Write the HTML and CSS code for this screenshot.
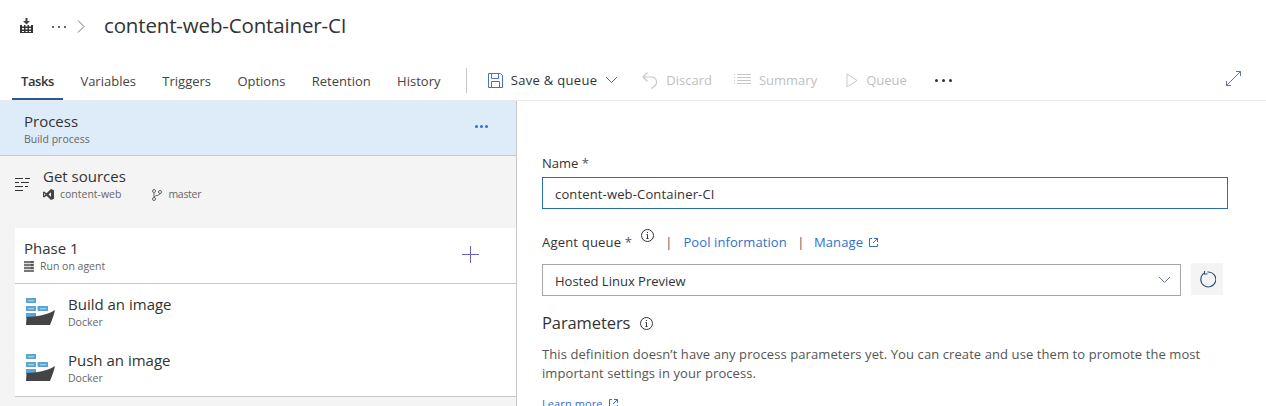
FILE: index.html
```html
<!DOCTYPE html>
<html lang="en">
<head>
    <meta charset="UTF-8">
    <title>content-web-Container-CI</title>
    <link rel="stylesheet" href="styles.css">
</head>
<body>
    <header class="title-bar">
        <svg class="build-icon" width="13" height="15" viewBox="0 0 13 15"><path d="M5.500 0h2v3H10L6.500 6.500 3 3h2.500z" fill="#444"/><path d="M0 7h2v1.500h2V7h1.500v1.500h2V7H9v1.500h2V7h2v8H0z" fill="#333"/><path d="M2 10h2v1.500H2zM5.500 10h2v1.500h-2zM9 10h2v1.500H9zM2 13h2v1H2zM5.500 13h2v1h-2zM9 13h2v1H9z" fill="#fff"/></svg>
        <span class="crumb-dots"><i></i><i></i><i></i></span>
        <svg class="crumb-arrow" width="8" height="13" viewBox="0 0 8 13"><path d="M1 .500l6 6-6 6" fill="none" stroke="#777"/></svg>
        <h1>content-web-Container-CI</h1>
    </header>

    <nav class="toolbar">
        <a class="tab active">Tasks</a>
        <a class="tab">Variables</a>
        <a class="tab">Triggers</a>
        <a class="tab">Options</a>
        <a class="tab">Retention</a>
        <a class="tab">History</a>
        <span class="divider"></span>
        <a class="cmd save">
            <svg width="15" height="15" viewBox="0 0 15 15"><path d="M.500.500h12l2 2v12H.500zM3.500.500v5h7v-5M3.500 14.500v-6h8v6" fill="none" stroke="#4a6fd0"/></svg>
            Save &amp; queue
            <svg class="chev" width="13" height="8" viewBox="0 0 13 8"><path d="M1 1l5.500 5.500L12 1" fill="none" stroke="#666"/></svg>
        </a>
        <a class="cmd off discard">
            <svg width="16" height="17" viewBox="0 0 16 17"><path d="M5.500 .500L1 5l4.500 4.500M1 5h8.500a5 5 0 0 1 3 9l-3 2.500" fill="none" stroke="#c8c8c8" stroke-width="1.200"/></svg>
            Discard
        </a>
        <a class="cmd off summary">
            <svg width="17" height="12" viewBox="0 0 17 12"><path d="M0 .500h1M3 .500h14M0 3.500h1M3 3.500h14M0 6.500h1M3 6.500h14M0 9.500h1M3 9.500h14" fill="none" stroke="#c8c8c8"/></svg>
            Summary
        </a>
        <a class="cmd off queue">
            <svg width="12" height="15" viewBox="0 0 12 15"><path d="M1 1l10 6.500L1 14z" fill="none" stroke="#c8c8c8"/></svg>
            Queue
        </a>
        <span class="more"><i></i><i></i><i></i></span>
        <svg class="expand" width="15" height="15" viewBox="0 0 15 15"><path d="M.500 14.500l14-14M10 .500h4.500V5M.500 10v4.500H5" fill="none" stroke="#5a70d8"/></svg>
    </nav>

    <main class="editor">
        <section class="left-pane">
            <div class="process-row">
                <div>
                    <div class="row-title">Process</div>
                    <div class="row-sub">Build process</div>
                </div>
                <span class="row-dots"><i></i><i></i><i></i></span>
            </div>

            <div class="sources-row">
                <svg class="sources-icon" width="15" height="15" viewBox="0 0 15 15"><path d="M0 1.500h8M10 1.500h5M0 5.500h4M6 5.500h8M0 9.500h8M10 9.500h3M0 13.500h8" fill="none" stroke="#333"/></svg>
                <div>
                    <div class="row-title">Get sources</div>
                    <div class="row-sub repo">
                        <svg width="11" height="11" viewBox="0 0 11 11"><path d="M8 0l3 1.300v8.400L8 11 3.500 6.800 1.200 8.500 0 8V3l1.200-.5 2.300 1.700zM8 3.300L5.500 5.500 8 7.700zM1.200 4v3l1.300-1.500z" fill="#444" fill-rule="evenodd"/></svg>
                        <span class="repo-name">content-web</span>
                        <svg width="10" height="12" viewBox="0 0 10 12"><circle cx="2" cy="2" r="1.500" fill="none" stroke="#666"/><circle cx="2" cy="10" r="1.500" fill="none" stroke="#666"/><circle cx="8" cy="3" r="1.500" fill="none" stroke="#666"/><path d="M2 3.500v5M8 4.500c0 2-6 2-6 4" fill="none" stroke="#666"/></svg>
                        <span class="branch">master</span>
                    </div>
                </div>
            </div>

            <div class="phase-card">
                <div class="phase-head">
                    <div class="phase-text">
                        <div class="row-title">Phase 1</div>
                        <div class="row-sub agent">
                            <svg width="10" height="11" viewBox="0 0 10 11"><path d="M0 0h10v11H0z" fill="#777"/><path d="M0 2.500h10M0 5.500h10M0 8.500h10" stroke="#ddd"/><path d="M7 1h2M7 4h2M7 7h2" stroke="#333"/></svg>
                            Run on agent
                        </div>
                    </div>
                    <svg class="add" width="17" height="17" viewBox="0 0 17 17"><path d="M8.500 0v17M0 8.500h17" stroke="#6a5fc9"/></svg>
                </div>
                <div class="task">
                    <svg class="docker" width="32" height="32" viewBox="0 0 32 32"><use href="#docker-ship"/></svg>
                    <div>
                        <div class="row-title">Build an image</div>
                        <div class="row-sub">Docker</div>
                    </div>
                </div>
                <div class="task">
                    <svg class="docker" width="32" height="32" viewBox="0 0 32 32"><use href="#docker-ship"/></svg>
                    <div>
                        <div class="row-title">Push an image</div>
                        <div class="row-sub">Docker</div>
                    </div>
                </div>
            </div>
        </section>

        <section class="right-pane">
            <label class="field-label" for="name">Name <span class="req">*</span></label>
            <input class="text-input" id="name" type="text" value="content-web-Container-CI">

            <div class="queue-label">
                <span class="queue-name">Agent queue <span class="req">*</span></span>
                <svg class="info raised" width="13" height="13" viewBox="0 0 13 13"><use href="#info-mark"/></svg>
                <span class="sep first">|</span>
                <a class="link">Pool information</a>
                <span class="sep">|</span>
                <a class="link">Manage</a>
                <svg class="ext" width="9" height="9" viewBox="0 0 9 9"><use href="#ext-mark"/></svg>
            </div>
            <div class="queue-row">
                <div class="select-box">
                    <span class="select-text">Hosted Linux Preview</span>
                    <svg width="13" height="8" viewBox="0 0 13 8"><path d="M1 1l5.500 5.500L12 1" fill="none" stroke="#6f7f90"/></svg>
                </div>
                <button class="refresh" type="button">
                    <svg width="17" height="17" viewBox="0 0 17 17"><path d="M5.500 2A7.500 7.500 0 1 0 8.500 1M5.500 0v3h3" fill="none" stroke="#2b4d7a" stroke-width="1.100"/></svg>
                </button>
            </div>

            <h2>Parameters <svg class="info" width="13" height="13" viewBox="0 0 13 13"><use href="#info-mark"/></svg></h2>
            <p class="param-text">This definition doesn’t have any process parameters yet. You can create and use them to promote the most important settings in your process.</p>
            <a class="link learn">Learn more <svg class="ext" width="9" height="9" viewBox="0 0 9 9"><use href="#ext-mark"/></svg></a>
        </section>
    </main>

    <svg class="defs" width="0" height="0">
        <symbol id="docker-ship" viewBox="0 0 32 32">
            <path d="M2 2h10v5H2zM2 10h10v5H2zM13.500 10H24v5H13.500zM2 17h10v5H2z" fill="#59a5d8"/>
            <path d="M4 4h6v1.200H4zM4 12h6v1.200H4zM16 12h6v1.200h-6z" fill="#a5cfeb"/>
            <path d="M2.500 21c10-.5 21-2 28.500-7-1 5-3 10-5 15H2z" fill="#444"/>
        </symbol>
        <symbol id="info-mark" viewBox="0 0 13 13">
            <circle cx="6.500" cy="6.500" r="6" fill="none" stroke="#333"/>
            <path d="M6.500 5.500v4M5.500 9.500h2M5.500 5.500h1" fill="none" stroke="#333"/>
            <path d="M6 3h1v1H6z" fill="#333"/>
        </symbol>
        <symbol id="ext-mark" viewBox="0 0 9 9">
            <path d="M3 .500H.500v8h8V6M5 .500h3.500V4M8.500 .500L4 5" fill="none" stroke="#2f6fd0"/>
        </symbol>
    </svg>
</body>
</html>
```

FILE: styles.css
```css
html, body {
    margin: 0;
    padding: 0;
    height: 406px;
    overflow: hidden;
}
body {
    font-family: "Open Sans", "Noto Sans", sans-serif;
    font-size: 13px;
    color: #333;
    background-color: white;
}
a {
    text-decoration: none;
}
.defs {
    position: absolute;
}

/* title */
.title-bar {
    display: flex;
    align-items: center;
    height: 52px;
    padding-left: 20px;
}
.build-icon {
    margin: 0 19px 2px 0;
}
.crumb-dots {
    display: flex;
    gap: 4px;
    margin: 2px 11px 0 0;
}
.crumb-dots i {
    width: 2px;
    height: 2px;
    background-color: #666;
}
.crumb-arrow {
    margin: 0 19px 0 0;
}
h1 {
    margin: 0 0 3px;
    font-size: 20.500px;
    font-weight: 400;
    letter-spacing: -0.150px;
    color: #333;
}

/* tabs + commands */
.toolbar {
    display: flex;
    align-items: center;
    height: 48px;
    padding-left: 12px;
    border-bottom: 1px solid #eaeaea;
}
.tab {
    display: flex;
    align-items: center;
    height: 38px;
    margin-top: 10px;
    padding: 0 9px;
    margin-right: 8.400px;
    box-sizing: border-box;
    color: #444;
}
.tab.active {
    color: #333;
    font-weight: 600;
    letter-spacing: -0.400px;
    border-bottom: 2px solid #2b579a;
    padding-top: 2px;
}
.divider {
    width: 1px;
    height: 25px;
    margin: 8px 21px 0 8px;
    background-color: #c8c8c8;
}
.cmd {
    display: flex;
    align-items: center;
    gap: 8px;
    margin-top: 8px;
    color: #333;
}
.save {
    letter-spacing: 0.300px;
}
.cmd.off {
    color: #c0c0c0;
}
.discard {
    margin-left: 24px;
}
.summary {
    margin-left: 22px;
}
.queue {
    margin-left: 29px;
}
.more {
    display: flex;
    gap: 4px;
    margin: 9px 0 0 28px;
}
.more i {
    width: 3px;
    height: 3px;
    border-radius: 50%;
    background-color: #333;
}
.expand {
    margin: 5px 25px 0 auto;
}

/* editor panes */
.editor {
    display: flex;
    height: 305px;
}
.left-pane {
    width: 516px;
    flex: none;
    background-color: #f4f4f4;
    border-right: 1px solid #c8c8c8;
}
.right-pane {
    flex: 1;
    padding: 53px 38px 0 25px;
}
.row-title {
    font-size: 15px;
    line-height: 20px;
    color: #333;
}
.row-sub {
    margin-top: 1px;
    font-size: 10.500px;
    line-height: 15px;
    color: #666;
}
.process-row {
    display: flex;
    align-items: center;
    justify-content: space-between;
    height: 55px;
    padding: 2px 28px 0 24px;
    box-sizing: border-box;
    background-color: #deecf9;
    border-bottom: 1px solid #c8c8c8;
}
.row-dots {
    display: flex;
    gap: 2px;
    margin-top: -6px;
}
.row-dots i {
    width: 3px;
    height: 3px;
    border-radius: 50%;
    background-color: #2f6fd0;
}
.sources-row {
    display: flex;
    height: 72px;
    padding: 10px 0 0 15px;
    box-sizing: border-box;
}
.sources-icon {
    margin: 11px 13px 0 0;
}
.repo {
    display: flex;
    align-items: center;
    gap: 6px;
}
.repo-name {
    margin-right: 25px;
}
.branch {
    letter-spacing: -0.300px;
}
.phase-card {
    margin-left: 15px;
    background-color: white;
    border-bottom: 1px solid #c8c8c8;
}
.phase-head {
    display: flex;
    align-items: center;
    justify-content: space-between;
    height: 56px;
    padding: 0 37px 0 9px;
    box-sizing: border-box;
    border-bottom: 1px solid #c8c8c8;
}
.phase-text {
    margin-top: 1px;
}
.add {
    margin-top: -2px;
}
.agent {
    display: flex;
    align-items: center;
    gap: 6px;
}
.task {
    display: flex;
    align-items: center;
    gap: 12px;
    height: 56px;
    padding-left: 9px;
}
.docker {
    flex: none;
}

/* right side form */
.field-label {
    display: block;
    line-height: 18px;
}
.req {
    color: #555;
}
.text-input {
    display: block;
    width: 100%;
    height: 32px;
    margin-top: 5px;
    padding: 2px 12px 0;
    box-sizing: border-box;
    font: inherit;
    letter-spacing: 0.150px;
    color: #333;
    border: 1px solid #2b6cb0;
    outline: none;
}
.queue-label {
    display: flex;
    align-items: center;
    margin-top: 24px;
    height: 18px;
}
.queue-name {
    letter-spacing: 0.200px;
}
.info.raised {
    margin: 0 0 14px 9px;
}
.sep {
    margin: 0 9.500px 0 10.500px;
    color: #555;
}
.sep.first {
    margin: 0 11px;
}
.link {
    color: #2f6fd0;
    letter-spacing: 0.100px;
}
.ext {
    margin-left: 6px;
}
.queue-row {
    display: flex;
    gap: 10px;
    margin: 13px 5px 0 0;
}
.select-box {
    display: flex;
    align-items: center;
    justify-content: space-between;
    flex: 1;
    height: 32px;
    padding: 0 9px 0 12px;
    box-sizing: border-box;
    border: 1px solid #a6a6a6;
}
.select-text {
    padding-top: 2px;
}
.refresh {
    display: flex;
    align-items: center;
    justify-content: center;
    width: 32px;
    height: 32px;
    margin-top: -1px;
    padding: 0;
    border: none;
    background-color: #f4f4f4;
}
h2 {
    display: flex;
    align-items: center;
    gap: 10px;
    margin: 16px 0 0;
    font-size: 16.500px;
    line-height: 22px;
    font-weight: 400;
    letter-spacing: -0.100px;
}
.param-text {
    margin: 11px 0 0;
    font-size: 13px;
    line-height: 19px;
    letter-spacing: 0.090px;
    color: #555;
}
.learn {
    display: block;
    margin-top: 13px;
    font-size: 11px;
}
.learn .ext {
    margin-left: 3px;
}
```
